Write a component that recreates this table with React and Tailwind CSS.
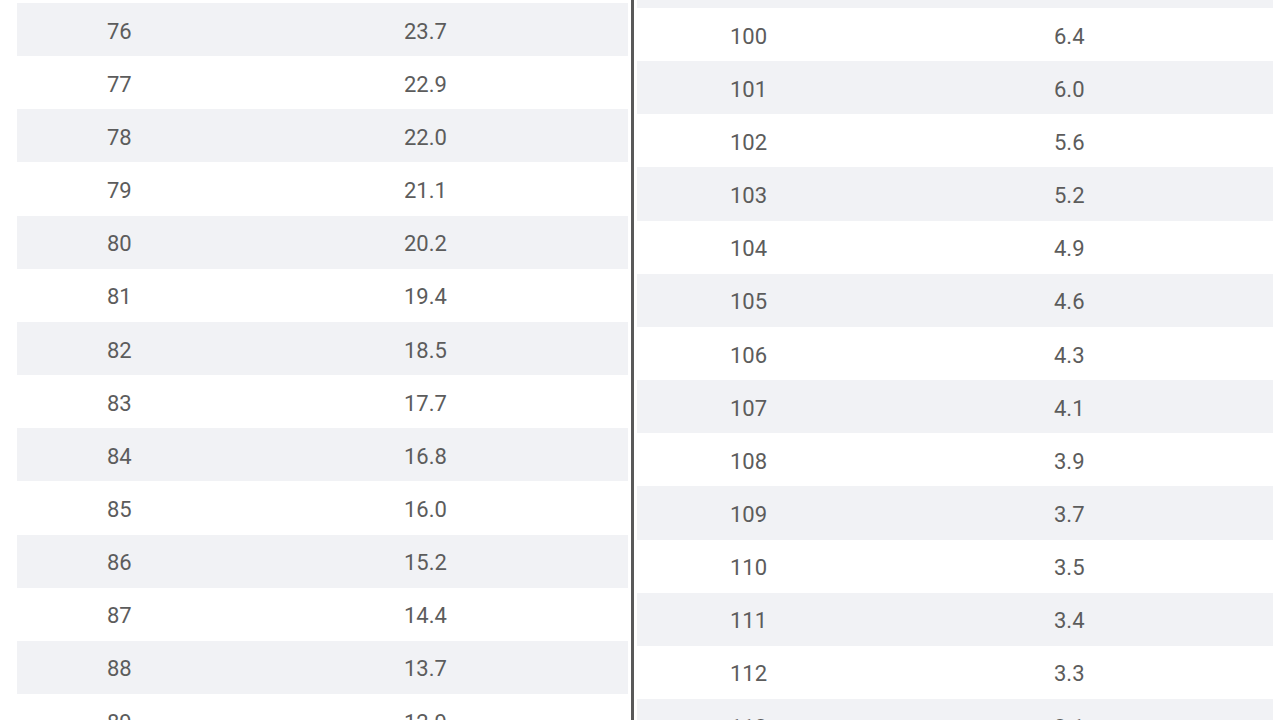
const LEFT = [
  ['76', '23.7'],
  ['77', '22.9'],
  ['78', '22.0'],
  ['79', '21.1'],
  ['80', '20.2'],
  ['81', '19.4'],
  ['82', '18.5'],
  ['83', '17.7'],
  ['84', '16.8'],
  ['85', '16.0'],
  ['86', '15.2'],
  ['87', '14.4'],
  ['88', '13.7'],
  ['89', '12.9'],
]

const RIGHT = [
  ['100', '6.4'],
  ['101', '6.0'],
  ['102', '5.6'],
  ['103', '5.2'],
  ['104', '4.9'],
  ['105', '4.6'],
  ['106', '4.3'],
  ['107', '4.1'],
  ['108', '3.9'],
  ['109', '3.7'],
  ['110', '3.5'],
  ['111', '3.4'],
  ['112', '3.3'],
  ['113', '3.1'],
]

// rows alternate; the first visible row in each table starts shaded / white
function Table({ rows, shadeFirst, firstCol, pad }) {
  return (
    <>
      {rows.map(([age, val], i) => {
        const shaded = shadeFirst ? i % 2 === 0 : i % 2 === 1
        return (
          <div
            key={age}
            className={`flex items-center pt-[3px] h-[53.17px] ${pad} ${shaded ? 'bg-[#f1f2f5]' : 'bg-white'}`}
          >
            <span className={firstCol}>{age}</span>
            <span>{val}</span>
          </div>
        )
      })}
    </>
  )
}

export default function App() {
  return (
    <div
      className="w-[1279px] h-[720px] overflow-hidden bg-white flex text-[22px] text-[#5c5c5c]"
      style={{ fontFamily: 'Roboto, "Liberation Sans", sans-serif' }}
    >
      <div className="ml-[17px] w-[611px]">
        <div className="h-[3px] bg-white" />
        <Table rows={LEFT} shadeFirst={true} pad="pl-[90px]" firstCol="w-[297px]" />
      </div>
      <div className="ml-[3px] w-[3px] h-full bg-[#595959]" />
      <div className="ml-[3px] w-[636px]">
        <div className="h-[8px] bg-[#f1f2f5]" />
        <Table rows={RIGHT} shadeFirst={false} pad="pl-[93px]" firstCol="w-[324px]" />
      </div>
    </div>
  )
}
